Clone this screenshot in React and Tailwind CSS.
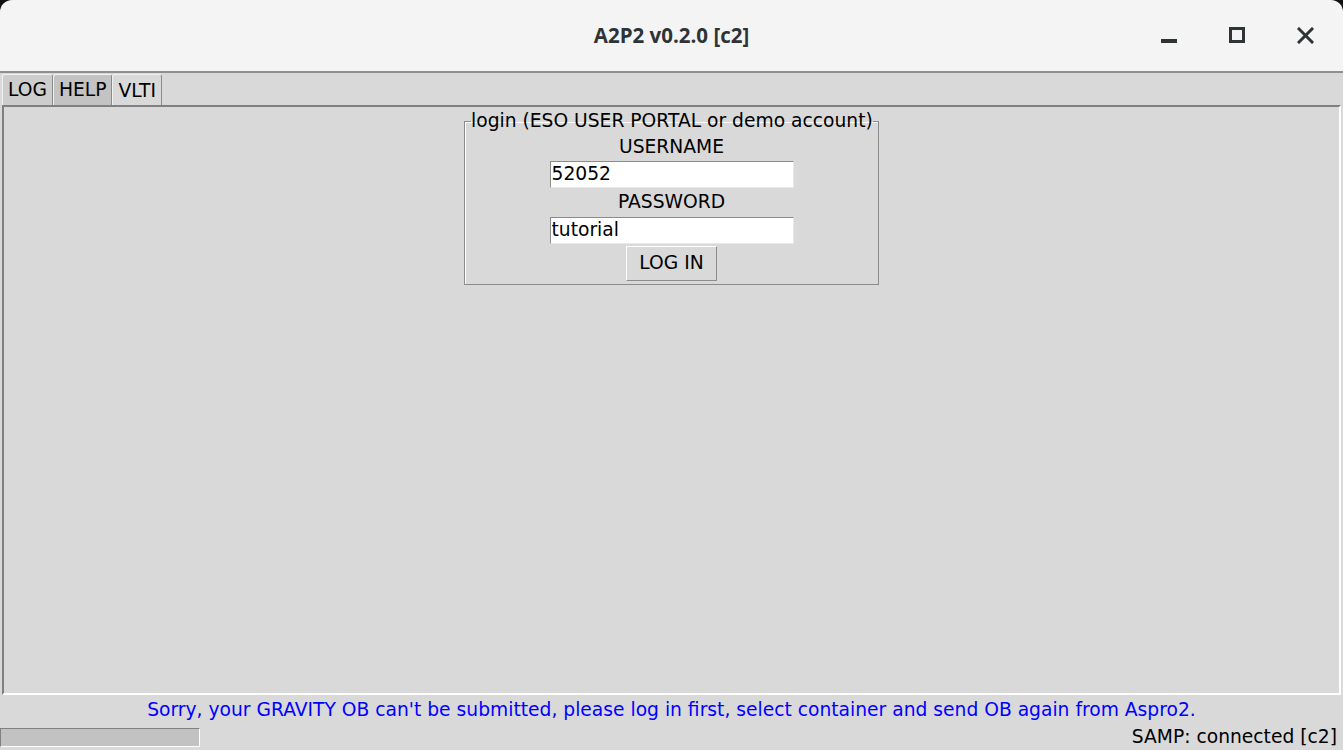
import React, { useState } from 'react';

const font = { fontFamily: '"DejaVu Sans", sans-serif' };

const TitleBar = () => (
  <div className="relative shrink-0 h-[73px] bg-[#f4f4f4] rounded-t-[12px] flex items-center justify-center border-b-2 border-[#8f8f8b]">
    <span className="text-[20.5px] font-bold text-[#2e3436]" style={{ fontFamily: '"Open Sans", sans-serif' }}>
      A2P2 v0.2.0 [c2]
    </span>
    <div className="absolute right-[29px] top-[27px] flex items-center gap-[51px]">
      <svg width="17" height="17" viewBox="0 0 17 17">
        <rect x="0" y="12" width="16" height="4" fill="#2e3436" />
      </svg>
      <svg width="17" height="17" viewBox="0 0 17 17">
        <rect x="1.5" y="1.5" width="13" height="13" fill="none" stroke="#2e3436" strokeWidth="3" />
      </svg>
      <svg width="17" height="17" viewBox="0 0 17 17">
        <path d="M2 2 L15 15 M15 2 L2 15" stroke="#2e3436" strokeWidth="3" strokeLinecap="square" />
      </svg>
    </div>
  </div>
);

const Tab = ({ label, active, onClick, bg }) => (
  <button
    onClick={onClick}
    className={`h-[31px] px-[5px] text-[18.7px] leading-[30px] text-black rounded-t-[3px] border-t border-l border-r border-t-[#f0f0f0] border-l-[#f0f0f0] border-r-[#8a8a8a] ${active ? 'bg-[#d9d9d9] h-[32px] -mb-px' : bg}`}
  >
    {label}
  </button>
);

const Entry = ({ value, onChange }) => (
  <input
    value={value}
    onChange={(e) => onChange(e.target.value)}
    className="w-[244px] h-[27px] bg-white text-black text-[18.7px] px-[1px] outline-none border border-t-[#8c8c8c] border-l-[#8c8c8c] border-b-[#e8e8e8] border-r-[#e8e8e8]"
    style={font}
  />
);

export default function App() {
  const [tab, setTab] = useState('VLTI');
  const [user, setUser] = useState('52052');
  const [pass, setPass] = useState('tutorial');

  return (
    <div className="w-[1343px] h-[750px] bg-[#111] overflow-hidden flex flex-col" style={font}>
      <TitleBar />
      <div className="flex-1 bg-[#d9d9d9] flex flex-col">
        <div className="shrink-0 flex items-end pl-[2px] pt-[1px] h-[32px]">
          <Tab label="LOG" bg="bg-[#cdcdcd]" active={tab === 'LOG'} onClick={() => setTab('LOG')} />
          <Tab label="HELP" bg="bg-[#c3c3c3]" active={tab === 'HELP'} onClick={() => setTab('HELP')} />
          <Tab label="VLTI" active={tab === 'VLTI'} onClick={() => setTab('VLTI')} />
        </div>
        <div className="shrink-0 mx-[2px] h-[590px] border-2 border-t-[#808080] border-l-[#808080] border-b-white border-r-white flex justify-center">
          <fieldset className="w-[415px] h-[175px] mt-[3px] border border-[#8c8c8c] shadow-[inset_1px_1px_0_#fff] flex flex-col items-center">
            <legend className="ml-[6px] px-0 whitespace-nowrap text-[18.7px] leading-[22px] text-black">
              login (ESO USER PORTAL or demo account)
            </legend>
            <div className="h-[26px] mt-[2px] text-[18.7px] leading-[26px] text-black">USERNAME</div>
            <div className="mt-[1px]">
              <Entry value={user} onChange={setUser} />
            </div>
            <div className="h-[26px] mt-[1px] text-[18.7px] leading-[26px] text-black">PASSWORD</div>
            <div className="mt-[2px]">
              <Entry value={pass} onChange={setPass} />
            </div>
            <button className="mt-[2px] w-[91px] h-[35px] bg-[#d9d9d9] text-[18.7px] text-black border border-t-white border-l-white border-b-[#8c8c8c] border-r-[#8c8c8c]">
              LOG IN
            </button>
          </fieldset>
        </div>
        <div className="shrink-0 h-[28px] flex items-center justify-center text-[18.7px] text-[#0000ff] pt-[3px]">
          Sorry, your GRAVITY OB can't be submitted, please log in first, select container and send OB again from Aspro2.
        </div>
        <div className="flex-1 min-h-0 flex items-center justify-between pr-[6px]">
          <div className="w-[200px] h-[19px] bg-[#c2c2c2] border border-t-[#808080] border-l-[#808080] border-b-white border-r-white" />
          <span className="text-[18.7px] text-black">SAMP: connected [c2]</span>
        </div>
      </div>
    </div>
  );
}
